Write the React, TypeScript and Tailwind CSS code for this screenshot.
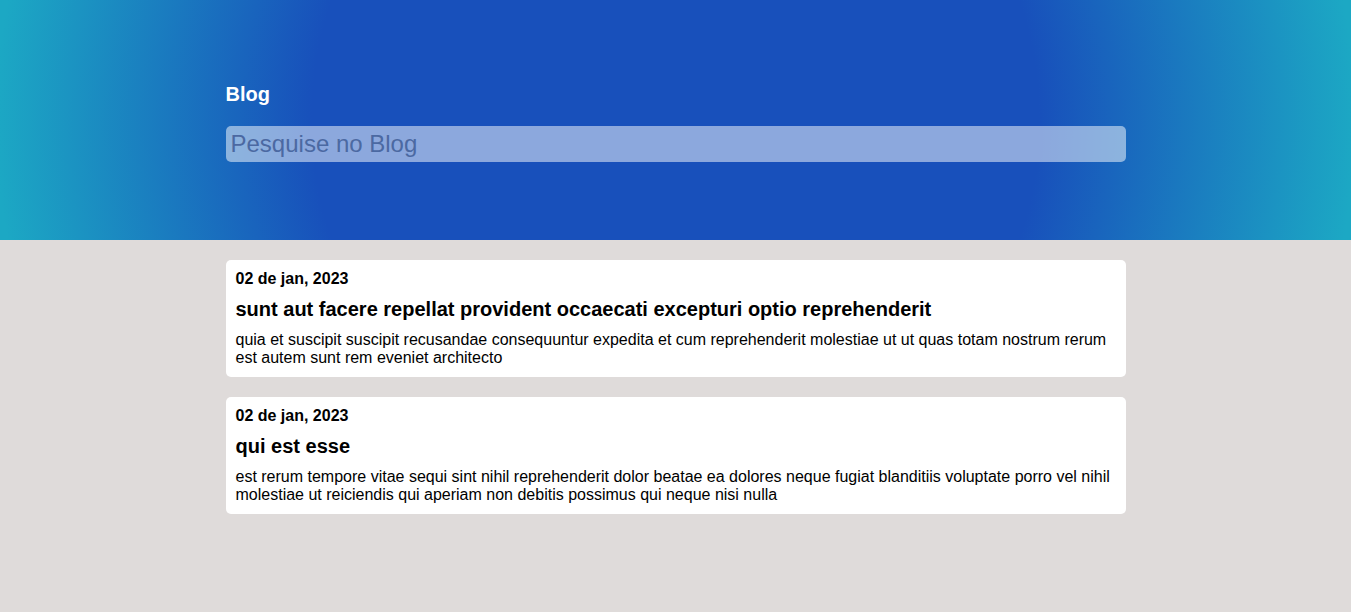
import React, { useState } from 'react';

const posts = [
  {
    id: 1,
    date: '02 de jan, 2023',
    title: 'sunt aut facere repellat provident occaecati excepturi optio reprehenderit',
    body: 'quia et suscipit suscipit recusandae consequuntur expedita et cum reprehenderit molestiae ut ut quas totam nostrum rerum est autem sunt rem eveniet architecto',
  },
  {
    id: 2,
    date: '02 de jan, 2023',
    title: 'qui est esse',
    body: 'est rerum tempore vitae sequi sint nihil reprehenderit dolor beatae ea dolores neque fugiat blanditiis voluptate porro vel nihil molestiae ut reiciendis qui aperiam non debitis possimus qui neque nisi nulla',
  },
];

const App: React.FC = () => {
  const [search, setSearch] = useState('');

  const filtered = posts.filter(p => p.title.toLowerCase().includes(search.toLowerCase()));

  return (
    <div className="min-h-screen bg-[#dfdbda] font-['Liberation_Sans',Arial,sans-serif] text-black">
      {/* Header */}
      <header className="h-[240px] bg-[radial-gradient(circle,#1850bb_53%,#1ca8c4_99%)] pt-[83px]">
        <div className="w-[900px] mx-auto">
          <h1 className="text-[20px] leading-[23px] font-bold text-white">Blog</h1>
          <input
            type="text"
            className="mt-[20px] w-full h-[36px] px-[5px] rounded-[5px] bg-white/50 text-[24px] text-[#2a3f6a] placeholder:text-[#4b69a2] outline-none"
            placeholder="Pesquise no Blog"
            value={search}
            onChange={(e) => setSearch(e.target.value)}
          />
        </div>
      </header>

      {/* Posts */}
      <main className="w-[900px] mx-auto pt-[20px] flex flex-col gap-[20px]">
        {filtered.map(post => (
          <article key={post.id} className="bg-white rounded-[5px] p-[10px] flex flex-col gap-[10px]">
            <span className="text-[16px] font-bold leading-[18px]">{post.date}</span>
            <h2 className="text-[20px] font-bold leading-[23px]">{post.title}</h2>
            <p className="text-[16px] leading-[18px]">{post.body}</p>
          </article>
        ))}
      </main>
    </div>
  );
};

export default App;
